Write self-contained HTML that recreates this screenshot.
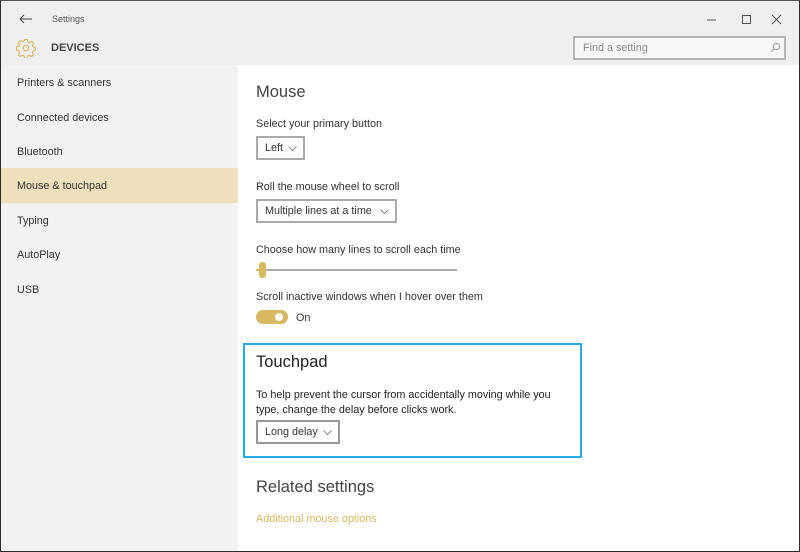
<!DOCTYPE html>
<html><head><meta charset="utf-8"><style>
*{margin:0;padding:0;box-sizing:border-box}
body{width:800px;height:552px;overflow:hidden;font-family:"Liberation Sans",sans-serif;background:#fff;position:relative}
.win{position:absolute;left:0;top:0;width:800px;height:552px;border:1px solid #2b2b2b;border-top-color:#555}
.tb{position:absolute;left:0;top:0;width:800px;height:65px;background:#efefef}
.side{position:absolute;left:0;top:65px;width:238px;height:487px;background:#f2f2f2}
.t{position:absolute;white-space:nowrap;color:#333;font-size:10.8px}
.item{position:absolute;left:0;width:238px;height:35px;font-size:10.8px;color:#333;padding-left:17px;line-height:36px}
.sel{background:#eee0bd}
.dd{position:absolute;height:24px;border:2px solid #aaa;font-size:10.8px;color:#333;line-height:21px;padding-left:7px;background:#fff}
.dd svg{position:absolute;right:6px;top:8px}
</style></head><body>
<div class="tb"></div>
<div class="side"></div>
<svg style="position:absolute;left:19px;top:14px" width="14" height="10"><path d="M1 5H13M1 5L5 1M1 5L5 9" stroke="#444" fill="none" stroke-width="1"/></svg>
<div class="t" style="left:52px;top:14px;font-size:9px;color:#555">Settings</div>
<svg style="position:absolute;left:706px;top:14px" width="80" height="12"><path d="M1 6H10" stroke="#555"/><rect x="36.5" y="1.5" width="8" height="8" stroke="#555" fill="none"/><path d="M66 1L75 10M75 1L66 10" stroke="#555"/></svg>
<svg style="position:absolute;left:16px;top:38px" width="20" height="20" viewBox="0 0 20 20"><circle cx="10" cy="10" r="2.8" stroke="#d8b860" fill="none" stroke-width="1.1"/><path d="M8.6 1.5h2.8l.5 2.3 1.7.8 2-1.3 2 2-1.3 2 .8 1.7 2.3.5v2.8l-2.3.5-.8 1.7 1.3 2-2 2-2-1.3-1.7.8-.5 2.3H8.6l-.5-2.3-1.7-.8-2 1.3-2-2 1.3-2-.8-1.7-2.3-.5V8.6l2.3-.5.8-1.7-1.3-2 2-2 2 1.3 1.7-.8z" stroke="#d8b860" fill="none" stroke-width="1.1"/></svg>
<div class="t" style="left:51px;top:42px;font-size:11px;font-weight:bold;color:#444">DEVICES</div>
<div style="position:absolute;left:573px;top:36px;width:213px;height:24px;border:2px solid #b5b5b5;background:#f7f7f7"></div>
<div class="t" style="left:583px;top:42px;color:#888">Find a setting</div>
<svg style="position:absolute;left:770px;top:42px" width="11" height="11"><circle cx="6.5" cy="4.5" r="3.3" stroke="#999" fill="none"/><path d="M4 7L1 10" stroke="#999"/></svg>
<div class="item" style="top:65px">Printers &amp; scanners</div>
<div class="item" style="top:100px">Connected devices</div>
<div class="item" style="top:134px">Bluetooth</div>
<div class="item sel" style="top:168px">Mouse &amp; touchpad</div>
<div class="item" style="top:203px">Typing</div>
<div class="item" style="top:237px">AutoPlay</div>
<div class="item" style="top:272px">USB</div>
<div class="t" style="left:256px;top:83px;font-size:16.5px;color:#444">Mouse</div>
<div class="t" style="left:256px;top:118px">Select your primary button</div>
<div class="dd" style="left:256px;top:136px;width:49px">Left<svg width="9" height="6"><path d="M.5.5L4.5 4.5 8.5.5" stroke="#888" fill="none"/></svg></div>
<div class="t" style="left:256px;top:181px">Roll the mouse wheel to scroll</div>
<div class="dd" style="left:256px;top:199px;width:141px">Multiple lines at a time<svg width="9" height="6"><path d="M.5.5L4.5 4.5 8.5.5" stroke="#888" fill="none"/></svg></div>
<div class="t" style="left:256px;top:244px">Choose how many lines to scroll each time</div>
<div style="position:absolute;left:256px;top:269px;width:201px;height:2px;background:#aaa"></div>
<div style="position:absolute;left:256px;top:269px;width:6px;height:2px;background:#d8b860"></div>
<div style="position:absolute;left:259px;top:262px;width:7px;height:16px;border-radius:3px;background:#d8b860"></div>
<div class="t" style="left:256px;top:291px">Scroll inactive windows when I hover over them</div>
<div style="position:absolute;left:256px;top:310px;width:32px;height:14px;border-radius:7px;background:#d8b860"></div>
<div style="position:absolute;left:275px;top:313px;width:8px;height:8px;border-radius:4px;background:#fff"></div>
<div class="t" style="left:296px;top:312px">On</div>
<div style="position:absolute;left:243px;top:343px;width:339px;height:115px;border:2px solid #27a9e1"></div>
<div class="t" style="left:256px;top:353px;font-size:16.5px;color:#222">Touchpad</div>
<div class="t" style="left:256px;top:388px;color:#222;line-height:15px">To help prevent the cursor from accidentally moving while you<br>type, change the delay before clicks work.</div>
<div class="dd" style="left:256px;top:420px;width:84px;border-color:#999">Long delay<svg width="9" height="6"><path d="M.5.5L4.5 4.5 8.5.5" stroke="#888" fill="none"/></svg></div>
<div class="t" style="left:256px;top:478px;font-size:16.5px;color:#444">Related settings</div>
<div class="t" style="left:256px;top:513px;color:#d8b860">Additional mouse options</div>
<div class="win"></div>
</body></html>
